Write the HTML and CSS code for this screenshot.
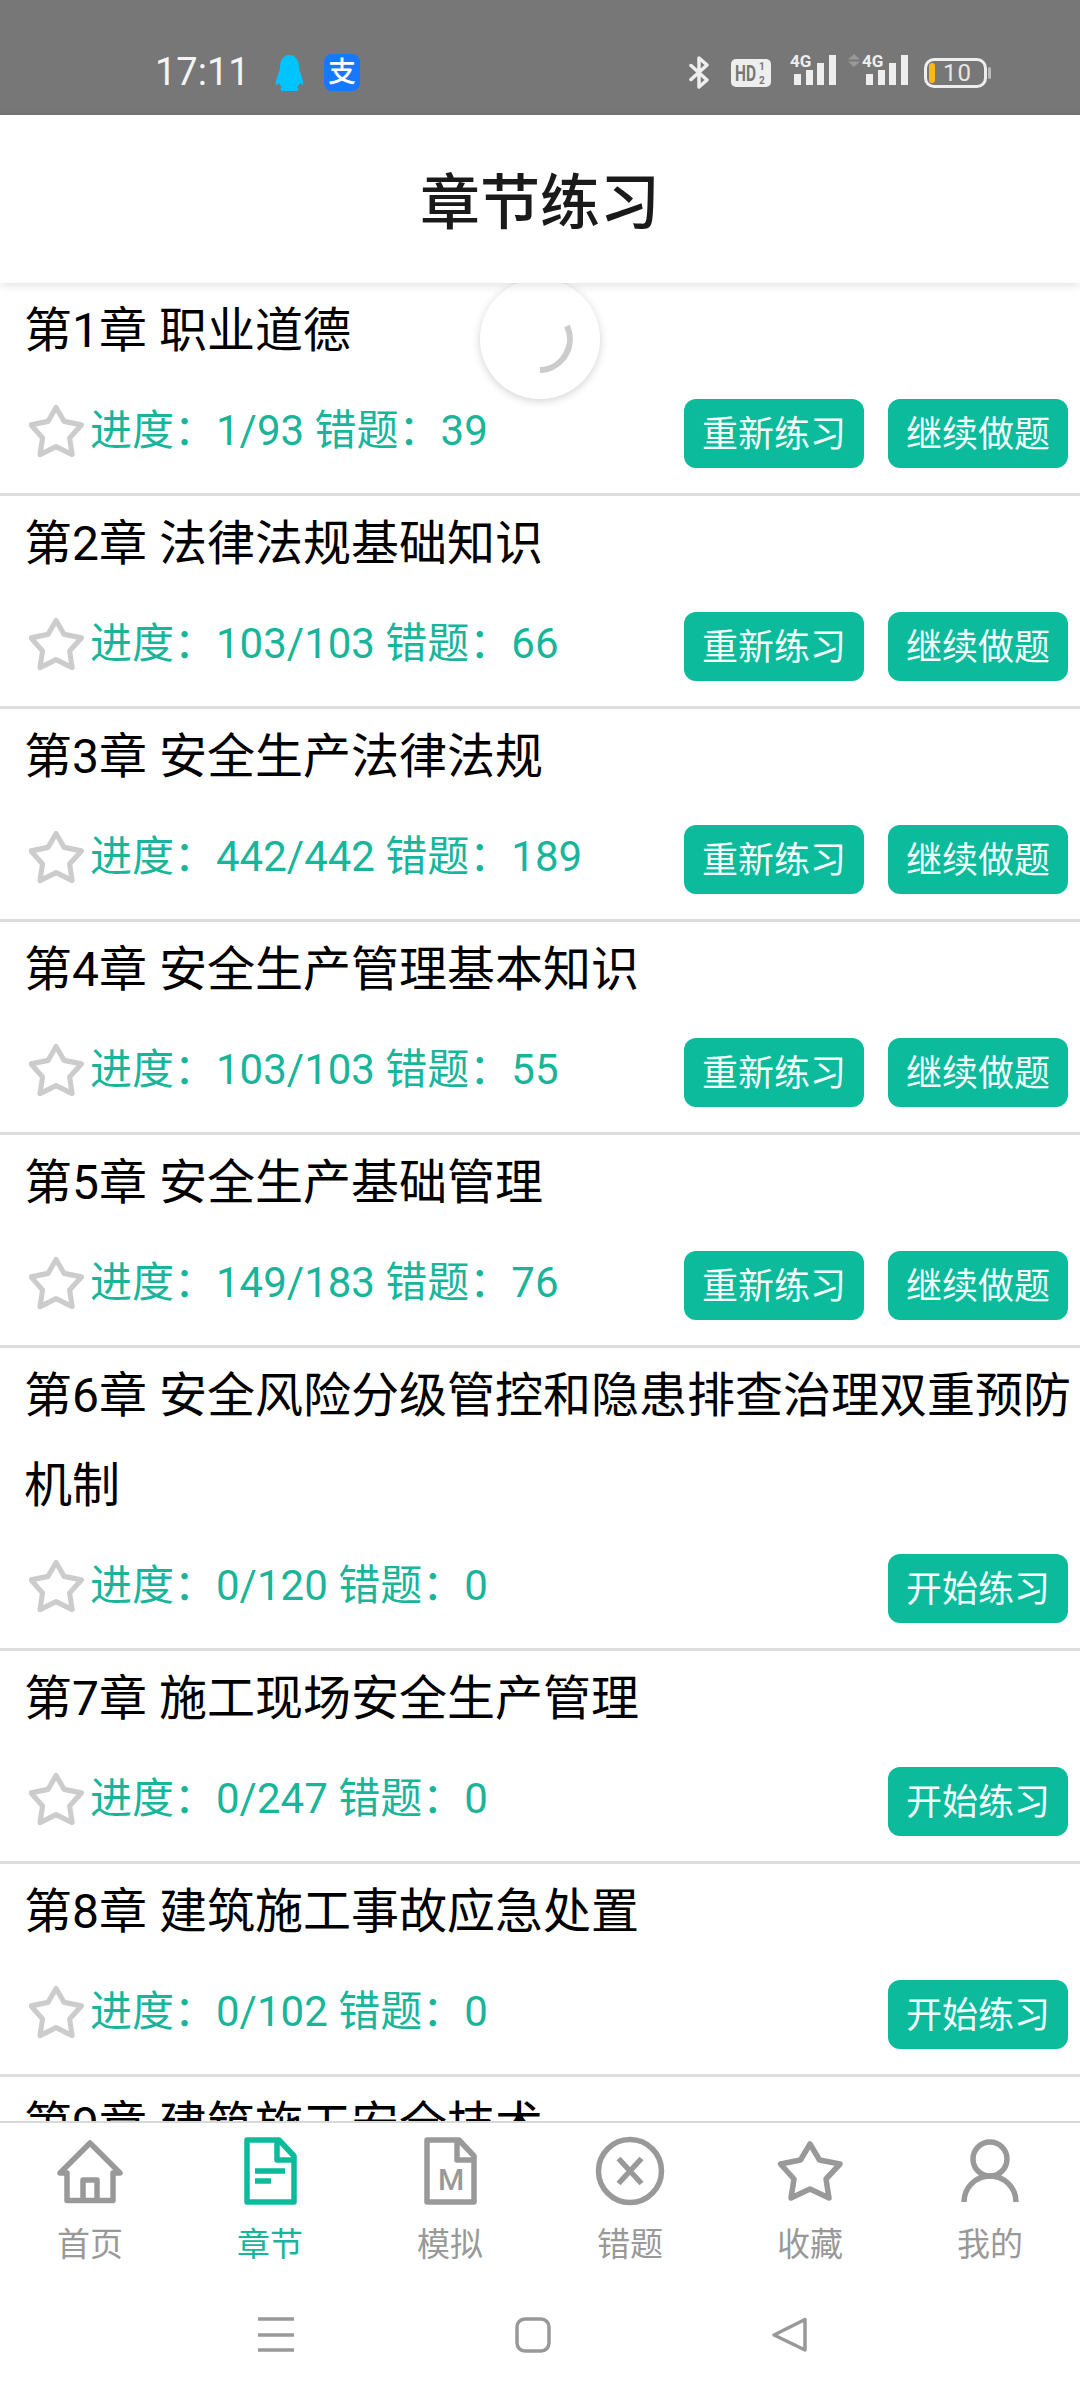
FILE: index.html
```html
<!DOCTYPE html>
<html lang="zh-CN">
<head>
<meta charset="utf-8">
<title>章节练习</title>
<link rel="stylesheet" href="styles.css">
</head>
<body>
<svg class="defs" width="0" height="0" aria-hidden="true">
  <defs>
    <polygon id="star-shape" points="32,4 41.5,20 62,24 48,39 51,58 32,49 13,58 16,39 2.5,24 22.5,20"/>
  </defs>
</svg>
<div class="app">
  <div class="status">
    <div class="status-left">
      <span class="clock">17:11</span>
      <svg class="ic-qq" width="29" height="36" viewBox="0 0 29 36"><path d="M14.5 0C8 0 5 6 5 12C5 15 4 17 3 20C1.5 24 0 28 1 30C2 30 3 29 4 28C5 30 6 31 7 32C5 33 5 35 7 36H22C24 35 24 33 22 32C23 31 24 30 25 28C26 29 27 30 28 30C29 28 27.5 24 26 20C25 17 24 15 24 12C24 6 21 0 14.5 0Z"/></svg>
      <span class="alipay">支</span>
    </div>
    <div class="status-right">
      <svg class="ic-bt" width="21" height="33" viewBox="0 0 21 33"><path d="M2 9.5L18 24L10 31V2L18 9L2 23.5"/></svg>
      <svg class="ic-hd" width="40" height="28" viewBox="0 0 40 28"><rect width="40" height="28" rx="5"/><text x="4" y="22" class="hd-main" textLength="21" lengthAdjust="spacingAndGlyphs">HD</text><text x="28" y="11" class="hd-sub">1</text><text x="28" y="25" class="hd-sub">2</text></svg>
      <svg class="ic-sig" width="46" height="32" viewBox="0 0 46 32"><text x="0" y="13" class="sig-text">4G</text><rect x="4" y="20" width="7" height="11"/><rect x="16" y="16" width="7" height="15"/><rect x="27" y="9" width="7" height="22"/><rect x="39" y="1" width="7" height="30"/></svg>
      <svg class="ic-sig ic-sig-two" width="60" height="32" viewBox="0 0 60 32"><path class="sig-arrow" d="M0 5.5L6 0L12 5.5ZM0 7.5L6 13L12 7.5Z"/><text x="14" y="13" class="sig-text">4G</text><rect x="18" y="20" width="7" height="11"/><rect x="30" y="16" width="7" height="15"/><rect x="41" y="9" width="7" height="22"/><rect x="53" y="1" width="7" height="30"/></svg>
      <svg class="ic-bat" width="67" height="30" viewBox="0 0 67 30"><rect class="bat-body" x="1.5" y="1.5" width="60" height="27" rx="8.5"/><rect class="bat-level" x="5" y="5" width="6" height="20" rx="3"/><rect class="bat-nub" x="64" y="9" width="3" height="12" rx="1.5"/><text x="19" y="23" class="bat-text">10</text></svg>
    </div>
  </div>

  <header class="topbar">章节练习</header>

  <main class="list">
    <div class="spinner"><svg width="120" height="120" viewBox="0 0 120 120"><path d="M87 47A31 31 0 0 1 60 91"/></svg></div>

    <section class="row">
      <h2 class="row-title">第1章 职业道德</h2>
      <div class="row-meta">
        <svg class="fav" viewBox="0 0 65 62" preserveAspectRatio="none"><use href="#star-shape"/></svg>
        <span class="progress">进度：1/93 错题：39</span>
        <div class="actions"><button class="btn">重新练习</button><button class="btn">继续做题</button></div>
      </div>
    </section>
    <section class="row">
      <h2 class="row-title">第2章 法律法规基础知识</h2>
      <div class="row-meta">
        <svg class="fav" viewBox="0 0 65 62" preserveAspectRatio="none"><use href="#star-shape"/></svg>
        <span class="progress">进度：103/103 错题：66</span>
        <div class="actions"><button class="btn">重新练习</button><button class="btn">继续做题</button></div>
      </div>
    </section>
    <section class="row">
      <h2 class="row-title">第3章 安全生产法律法规</h2>
      <div class="row-meta">
        <svg class="fav" viewBox="0 0 65 62" preserveAspectRatio="none"><use href="#star-shape"/></svg>
        <span class="progress">进度：442/442 错题：189</span>
        <div class="actions"><button class="btn">重新练习</button><button class="btn">继续做题</button></div>
      </div>
    </section>
    <section class="row">
      <h2 class="row-title">第4章 安全生产管理基本知识</h2>
      <div class="row-meta">
        <svg class="fav" viewBox="0 0 65 62" preserveAspectRatio="none"><use href="#star-shape"/></svg>
        <span class="progress">进度：103/103 错题：55</span>
        <div class="actions"><button class="btn">重新练习</button><button class="btn">继续做题</button></div>
      </div>
    </section>
    <section class="row">
      <h2 class="row-title">第5章 安全生产基础管理</h2>
      <div class="row-meta">
        <svg class="fav" viewBox="0 0 65 62" preserveAspectRatio="none"><use href="#star-shape"/></svg>
        <span class="progress">进度：149/183 错题：76</span>
        <div class="actions"><button class="btn">重新练习</button><button class="btn">继续做题</button></div>
      </div>
    </section>
    <section class="row">
      <h2 class="row-title">第6章 安全风险分级管控和隐患排查治理双重预防机制</h2>
      <div class="row-meta">
        <svg class="fav" viewBox="0 0 65 62" preserveAspectRatio="none"><use href="#star-shape"/></svg>
        <span class="progress">进度：0/120 错题：0</span>
        <div class="actions"><button class="btn">开始练习</button></div>
      </div>
    </section>
    <section class="row">
      <h2 class="row-title">第7章 施工现场安全生产管理</h2>
      <div class="row-meta">
        <svg class="fav" viewBox="0 0 65 62" preserveAspectRatio="none"><use href="#star-shape"/></svg>
        <span class="progress">进度：0/247 错题：0</span>
        <div class="actions"><button class="btn">开始练习</button></div>
      </div>
    </section>
    <section class="row">
      <h2 class="row-title">第8章 建筑施工事故应急处置</h2>
      <div class="row-meta">
        <svg class="fav" viewBox="0 0 65 62" preserveAspectRatio="none"><use href="#star-shape"/></svg>
        <span class="progress">进度：0/102 错题：0</span>
        <div class="actions"><button class="btn">开始练习</button></div>
      </div>
    </section>
    <section class="row">
      <h2 class="row-title">第9章 建筑施工安全技术</h2>
    </section>
  </main>

  <nav class="tabs">
    <div class="tab">
      <div class="tab-icon"><svg width="68" height="64" viewBox="0 0 68 64"><path d="M11 34H4L34 4L64 34H57V61.5H11ZM27 61V41H41V61"/></svg></div>
      <span class="tab-label">首页</span>
    </div>
    <div class="tab tab-on">
      <div class="tab-icon"><svg width="53" height="68" viewBox="0 0 53 68"><path d="M3 3H35L50 19V65H3ZM33 3V23H50M11 34H41"/><path d="M11 44H27"/></svg></div>
      <span class="tab-label">章节</span>
    </div>
    <div class="tab">
      <div class="tab-icon"><svg width="53" height="68" viewBox="0 0 53 68"><path d="M3 3H35L50 19V65H3ZM33 3V23H50"/><text x="27" y="53" text-anchor="middle" class="doc-m">M</text></svg></div>
      <span class="tab-label">模拟</span>
    </div>
    <div class="tab">
      <div class="tab-icon"><svg width="68" height="68" viewBox="0 0 68 68"><circle cx="34" cy="34" r="31.5"/><path d="M22.5 21.5L45.5 46.5M45.5 21.5L22.5 46.5"/></svg></div>
      <span class="tab-label">错题</span>
    </div>
    <div class="tab">
      <div class="tab-icon"><svg width="65" height="62" viewBox="0 0 65 62"><use href="#star-shape"/></svg></div>
      <span class="tab-label">收藏</span>
    </div>
    <div class="tab">
      <div class="tab-icon"><svg width="58" height="62" viewBox="0 0 58 62"><circle cx="29" cy="19" r="17"/><path d="M3 62A26 26 0 0 1 55 62"/></svg></div>
      <span class="tab-label">我的</span>
    </div>
  </nav>

  <div class="sysnav">
    <svg width="36" height="35" viewBox="0 0 36 35"><path d="M0 2H36M0 18H36M0 33H36"/></svg>
    <svg width="36" height="36" viewBox="0 0 36 36"><rect x="2" y="2" width="32" height="32" rx="8"/></svg>
    <svg width="36" height="36" viewBox="0 0 36 36"><path d="M33 2.5V33L2 18Z"/></svg>
  </div>
</div>
</body>
</html>
```
FILE: styles.css
```css
* { box-sizing: border-box; }
html, body { margin: 0; padding: 0; background: #fff; }
body { font-family: Roboto, "Noto Sans CJK SC", sans-serif; }
.defs { position: absolute; }

.app { width: 1080px; height: 2400px; display: flex; flex-direction: column; overflow: hidden; background: #fff; }

/* status bar */
.status { height: 115px; flex: none; background: #777; display: flex; justify-content: space-between; align-items: flex-start; padding: 54px 89px 0 155px; }
.status-left { display: flex; align-items: center; height: 37px; }
.clock { color: #f4f4f4; font-size: 38px; line-height: 37px; width: 120px; }
.ic-qq { fill: #00c4ff; }
.alipay { width: 36px; height: 37px; margin-left: 20px; border-radius: 8px; background: #1677ff; color: #fff; font-size: 28px; font-weight: 500; line-height: 37px; text-align: center; }
.status-right { display: flex; align-items: center; height: 37px; gap: 19px; }
.ic-bt { fill: none; stroke: #eee; stroke-width: 3.5; stroke-linejoin: round; stroke-linecap: round; margin-right: 2px; }
.ic-hd rect { fill: #eee; }
.hd-main { font: 700 22px "Roboto", sans-serif; fill: #777; }
.hd-sub { font: 700 10px "Roboto", sans-serif; fill: #777; }
.ic-sig { margin-top: -6px; overflow: visible; }
.ic-sig rect { fill: #eee; }
.sig-text { font: 700 17px "Roboto", sans-serif; fill: #eee; }
.sig-arrow { fill: #999; }
.ic-sig-two { margin-left: -7px; margin-right: -3px; }
.bat-body { fill: none; stroke: #eee; stroke-width: 3; }
.bat-level { fill: #fdb913; }
.bat-nub { fill: #bbb; }
.bat-text { font: 400 24px "Roboto", sans-serif; fill: #e6e6e6; letter-spacing: 1px; }

/* header */
.topbar { height: 168px; flex: none; padding-top: 10px; background: #fff; position: relative; z-index: 2; box-shadow: 0 2px 10px rgba(0, 0, 0, .12); color: #1a1a1a; font-size: 60px; font-weight: 500; line-height: 158px; text-align: center; }

/* list */
.list { flex: 1; min-height: 0; overflow: hidden; position: relative; }
.spinner { position: absolute; left: 480px; top: -4px; width: 120px; height: 120px; border-radius: 50%; background: #fff; box-shadow: 0 2px 8px rgba(0, 0, 0, .18); z-index: 1; }
.spinner svg { display: block; fill: none; stroke: #ccc; stroke-width: 6; }

.row { border-bottom: 3px solid #ddd; }
.row-title { margin: 0; padding: 3px 0 0 24px; color: #000; font-size: 48px; font-weight: 400; line-height: 90px; }
.row-meta { display: flex; align-items: center; height: 117px; padding: 0 12px 3px 29px; }
.fav { width: 55px; height: 54px; flex: none; margin-top: -4px; fill: none; stroke: #ccc; stroke-width: 6; stroke-linejoin: round; }
.progress { margin-left: 6px; color: #18b59a; font-size: 42px; line-height: 54px; margin-top: -4px; }
.actions { margin-left: auto; display: flex; gap: 24px; }
.btn { height: 69px; padding: 4px 18px 0; border: 0; border-radius: 12px; background: #0bbb9b; color: #f2fffb; font-family: inherit; font-size: 36px; line-height: 65px; }

/* tabs */
.tabs { height: 179px; flex: none; display: grid; grid-template-columns: repeat(6, 1fr); padding-top: 14px; border-top: 2px solid #d8d8d8; background: #fff; position: relative; z-index: 2; }
.tab { display: flex; flex-direction: column; align-items: center; color: #999; }
.tab-icon { height: 68px; display: flex; align-items: center; justify-content: center; }
.tab-icon svg { display: block; fill: none; stroke: #999; stroke-width: 5.5; stroke-linejoin: round; overflow: visible; }
.tab-label { font-size: 33px; line-height: 42px; margin-top: 19px; }
.tab-on { color: #18b59a; }
.tab-on .tab-icon svg { stroke: #0bbb9b; }
.doc-m { font: 500 30px Roboto, sans-serif; fill: #999; stroke: none; }

/* system nav */
.sysnav { height: 100px; flex: none; display: flex; justify-content: center; gap: 221px; padding: 17px 14px 0 0; background: #fff; }
.sysnav svg { display: block; fill: none; stroke: #999; stroke-width: 3.5; stroke-linejoin: round; overflow: visible; }
```
